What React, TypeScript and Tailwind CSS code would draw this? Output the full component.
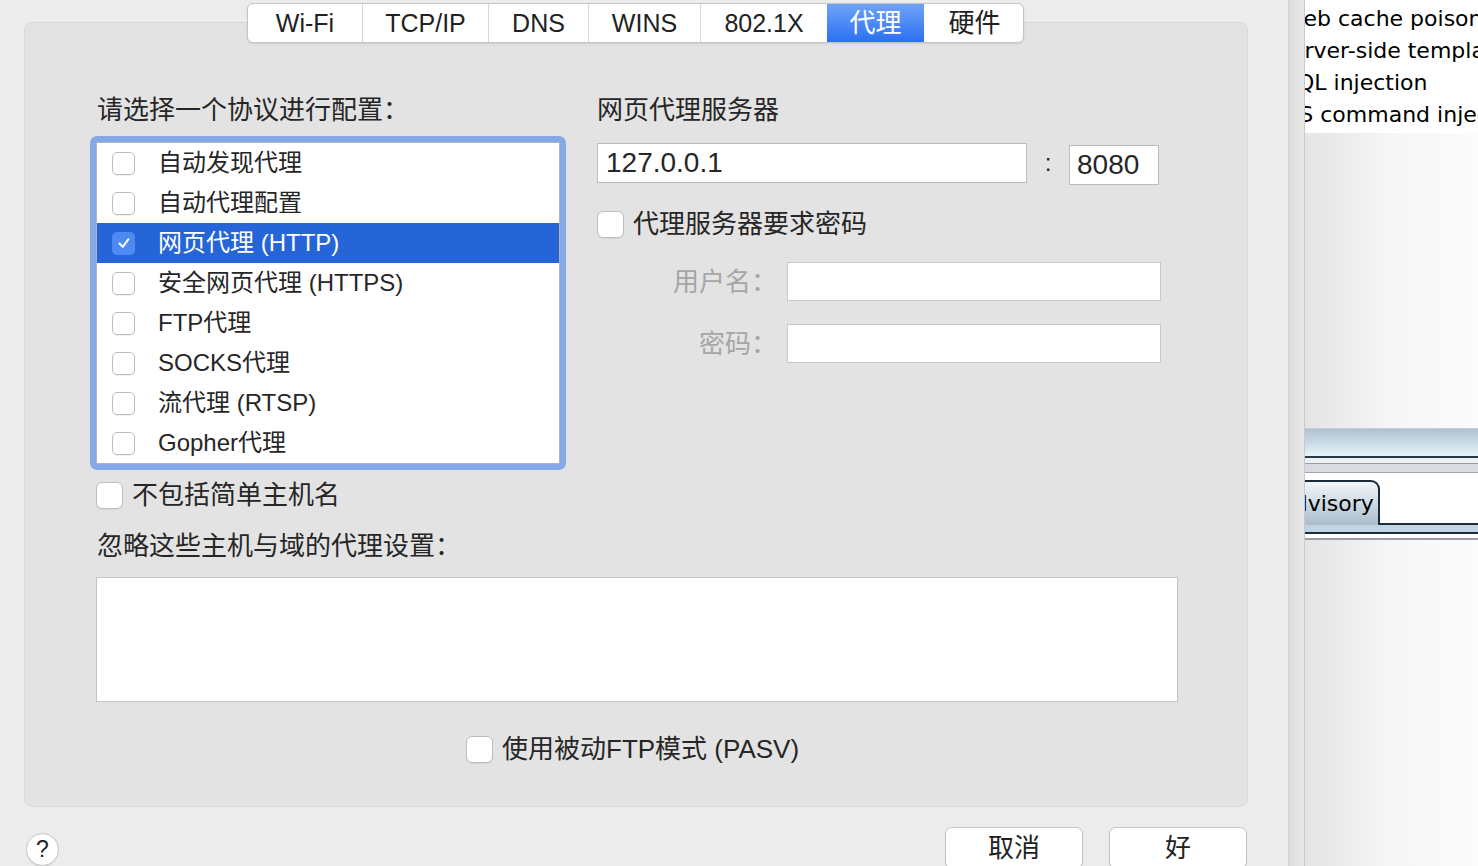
import React from "react";

const FONT = "font-['Liberation_Sans','Noto_Sans_CJK_SC',sans-serif]";

function Check({ className = "" }: { className?: string }) {
  return (
    <svg viewBox="0 0 20 20" className={className} fill="none">
      <path d="M5 10.5 L8.6 14.2 L15 5.8" stroke="white" strokeWidth="2.2" strokeLinecap="round" strokeLinejoin="round" />
    </svg>
  );
}

function Box({ size = "sm", checked = false }: { size?: "sm" | "lg"; checked?: boolean }) {
  const dim = size === "sm" ? "w-[23px] h-[23px] rounded-[5px]" : "w-[27px] h-[27px] rounded-[6px]";
  if (checked) {
    return (
      <div className={`${dim} shrink-0 bg-[#4f8af2] flex items-center justify-center`}>
        <Check className="w-[18px] h-[18px]" />
      </div>
    );
  }
  return (
    <div
      className={`${dim} shrink-0 bg-white border border-[#bdbdbd] shadow-[0_1px_1px_rgba(0,0,0,0.06)]`}
    />
  );
}

const tabs = [
  { label: "Wi-Fi", w: "w-[114px]", size: "text-[25px]" },
  { label: "TCP/IP", w: "w-[126px]", size: "text-[25px]" },
  { label: "DNS", w: "w-[100px]", size: "text-[25px]" },
  { label: "WINS", w: "w-[112px]", size: "text-[25px]" },
  { label: "802.1X", w: "w-[127px]", size: "text-[25px]" },
  { label: "代理", w: "w-[97px]", size: "text-[26px]", active: true },
  { label: "硬件", w: "w-[101px]", size: "text-[26px]" },
];

const protocols = [
  { label: "自动发现代理" },
  { label: "自动代理配置" },
  { label: "网页代理 (HTTP)", selected: true },
  { label: "安全网页代理 (HTTPS)" },
  { label: "FTP代理" },
  { label: "SOCKS代理" },
  { label: "流代理 (RTSP)" },
  { label: "Gopher代理" },
];

const btn =
  "w-[138px] h-[42px] rounded-[7px] bg-white border border-[#c6c6c6] shadow-[0_1px_1px_rgba(0,0,0,0.08)] flex items-center justify-center text-[26px] text-[#222] leading-none";

function Dialog() {
  return (
    <div className="w-[1288px] h-[866px] shrink-0 bg-[#ececec] flex flex-col pt-[3px] overflow-hidden">
      {/* Segmented tabs */}
      <div className="ml-[247px] w-[777px] h-[40px] shrink-0 relative z-10 flex rounded-[6px] border border-[#c4c4c4] bg-white shadow-[0_1px_2px_rgba(0,0,0,0.10)] overflow-hidden">
        {tabs.map((t, i) => (
          <div
            key={t.label}
            className={`${t.w} ${t.size} shrink-0 h-full flex items-center justify-center leading-none ${
              i > 0 && !t.active && !tabs[i - 1].active ? "border-l border-[#d6d6d6]" : ""
            } ${t.active ? "bg-gradient-to-b from-[#6ea3f8] to-[#2b6ff2] text-white" : "text-[#222]"}`}
          >
            {t.label}
          </div>
        ))}
      </div>

      {/* Group box */}
      <div className="ml-[24px] w-[1224px] h-[785px] shrink-0 -mt-[21px] rounded-[8px] bg-[#e3e3e3] border border-[#d8d8d8] flex flex-col pt-[71px] pl-[65px] text-[#262626]">
        <div className="flex">
          {/* Left column */}
          <div className="w-[476px] flex flex-col">
            <div className="h-[32px] leading-[32px] pl-[7px] text-[26px]">请选择一个协议进行配置：</div>
            <div className="mt-[10px] rounded-[7px] bg-[#84a8e8] p-[6px]">
              <div className="bg-white border border-[#b4b4b4] flex flex-col">
                {protocols.map((p) => (
                  <div
                    key={p.label}
                    className={`h-[40px] flex items-center pl-[15px] ${p.selected ? "bg-[#2565d8] text-white" : ""}`}
                  >
                    <Box checked={p.selected} />
                    <span className="ml-[23px] text-[24px] leading-none">{p.label}</span>
                  </div>
                ))}
              </div>
            </div>
          </div>

          {/* Right column */}
          <div className="ml-[31px] flex flex-col">
            <div className="h-[32px] leading-[32px] text-[26px]">网页代理服务器</div>
            <div className="mt-[17px] flex items-start">
              <div className="w-[430px] h-[40px] bg-white border border-[#bcbcbc] flex items-center pl-[8px] text-[28px] leading-none">
                127.0.0.1
              </div>
              <div className="w-[42px] h-[40px] flex items-center justify-center text-[24px]">:</div>
              <div className="mt-[2px] w-[90px] h-[40px] bg-white border border-[#bcbcbc] flex items-center pl-[7px] text-[28px] leading-none">
                8080
              </div>
            </div>
            <div className="mt-[25px] h-[28px] flex items-center">
              <Box size="lg" />
              <span className="ml-[9px] text-[26px] leading-none">代理服务器要求密码</span>
            </div>
            <div className="mt-[24px] flex items-center">
              <div className="w-[180px] text-right text-[26px] text-[#a6a6a6] leading-none">用户名：</div>
              <div className="ml-[10px] w-[374px] h-[39px] bg-white border border-[#c8c8c8]" />
            </div>
            <div className="mt-[23px] flex items-center">
              <div className="w-[180px] text-right text-[26px] text-[#a6a6a6] leading-none">密码：</div>
              <div className="ml-[10px] w-[374px] h-[39px] bg-white border border-[#c8c8c8]" />
            </div>
          </div>
        </div>

        <div className="mt-[11px] h-[28px] pl-[6px] flex items-center">
          <Box size="lg" />
          <span className="ml-[9px] text-[26px] leading-none">不包括简单主机名</span>
        </div>
        <div className="mt-[21px] h-[32px] leading-[32px] pl-[7px] text-[26px]">忽略这些主机与域的代理设置：</div>
        <div className="mt-[15px] ml-[6px] w-[1082px] h-[125px] bg-white border border-[#c4c4c4]" />
        <div className="mt-[33px] ml-[376px] h-[28px] flex items-center">
          <Box size="lg" />
          <span className="ml-[9px] text-[26px] leading-none">使用被动FTP模式 (PASV)</span>
        </div>
      </div>

      {/* Bottom buttons */}
      <div className="mt-[20px] flex items-start">
        <div className="ml-[26px] mt-[6px] w-[33px] h-[33px] rounded-full bg-white border border-[#c6c6c6] shadow-[0_1px_1px_rgba(0,0,0,0.08)] flex items-center justify-center text-[23px] text-[#222] leading-none">
          ?
        </div>
        <div className="ml-auto mr-[41px] flex gap-[26px]">
          <div className={btn}>取消</div>
          <div className={btn}>好</div>
        </div>
      </div>
    </div>
  );
}

const rows = [
  { text: "Web cache poisoning", ml: "-ml-[22px]" },
  { text: "Server-side template injection", ml: "-ml-[28px]" },
  { text: "SQL injection", ml: "-ml-[22px]" },
  { text: "OS command injection", ml: "-ml-[23px]" },
];

function RightWindow() {
  return (
    <div className="flex-1 h-[866px] overflow-hidden flex flex-col bg-gradient-to-r from-[#e4e4e4] via-[#f6f6f6] to-[#fbfbfb] border-l border-[#c9c9c9] font-['DejaVu_Sans',sans-serif] text-black">
      <div className="bg-white pt-[3px] pb-[2px] flex flex-col shrink-0">
        {rows.map((r) => (
          <div key={r.text} className="h-[32px] flex items-center whitespace-nowrap text-[22px] leading-none">
            <span className={r.ml}>{r.text}</span>
          </div>
        ))}
      </div>
      <div className="h-[295px] shrink-0" />
      {/* Swing-like tab header */}
      <div className="h-[1px] shrink-0 bg-[#c6ccd4]" />
      <div className="h-[27px] shrink-0 bg-gradient-to-b from-[#aec2d4] to-[#e6f3f8]" />
      <div className="h-[2px] shrink-0 bg-[#2b3a4a]" />
      <div className="h-[5px] shrink-0 bg-[#eef0f3]" />
      <div className="h-[1px] shrink-0 bg-[#989ca5]" />
      <div className="h-[8px] shrink-0 bg-[#d9dbe1]" />
      <div className="h-[1px] shrink-0 bg-[#a0a4ac]" />
      <div className="h-[7px] shrink-0 bg-white" />
      <div className="flex items-end h-[45px] shrink-0 bg-white">
        <div className="w-[77px] h-[45px] -ml-[2px] rounded-tr-[9px] border-2 border-b-0 border-[#1d2a38] bg-gradient-to-b from-[#f4f7f9] to-[#a9bdcc] flex items-center overflow-hidden">
          <span className="-ml-[26px] text-[22px] leading-none whitespace-nowrap">Advisory</span>
        </div>
        <div className="flex-1 h-[2px] bg-[#1d2a38]" />
      </div>
      <div className="h-[7px] shrink-0 bg-[#c1d4e6]" />
      <div className="h-[2px] shrink-0 bg-[#1d2a38]" />
      <div className="h-[4px] shrink-0 bg-white" />
      <div className="h-[2px] shrink-0 bg-[#9a9da5]" />
    </div>
  );
}

export default function App() {
  return (
    <div className={`w-[1478px] h-[866px] flex overflow-hidden ${FONT}`}>
      <Dialog />
      <div className="w-[16px] h-[866px] shrink-0 bg-gradient-to-r from-[#dcdcdc] to-[#e8e8e8] border-l border-[#d2d2d2]" />
      <RightWindow />
    </div>
  );
}
